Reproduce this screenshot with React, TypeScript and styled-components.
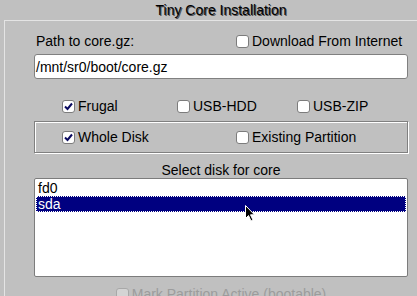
import React from "react";
import styled, { createGlobalStyle } from "styled-components";

const GlobalStyle = createGlobalStyle`
  html, body {
    margin: 0;
    padding: 0;
    background: #c0c0c0;
  }
  body {
    font-family: "Liberation Sans", Arial, sans-serif;
    font-size: 14px;
    color: #000;
  }
  * { box-sizing: border-box; }
`;

const Viewport = styled.div`
  width: 417px;
  height: 296px;
  overflow: hidden;
  position: relative;
  background: #c0c0c0;
`;

const Window = styled.div`
  width: 442px;
  display: flex;
  flex-direction: column;
`;

const Title = styled.div`
  height: 20px;
  padding-top: 2px;
  line-height: 16px;
  text-align: center;
  color: #000;
  text-shadow: 1px 1px 0 #505050;
`;

const Panel = styled.div`
  margin-left: 4px;
  height: 400px;
  border-top: 1px solid #e4e4e4;
  border-left: 1px solid #e4e4e4;
  display: flex;
  flex-direction: column;
  padding-left: 29px;
`;

const Content = styled.div`
  width: 374px;
  display: flex;
  flex-direction: column;
`;

const TopRow = styled.div`
  margin-top: 12px;
  height: 16px;
  display: flex;
  align-items: center;
`;

const FieldLabel = styled.span`
  line-height: 16px;
  padding-left: 2px;
  width: 202px;
`;

const TextInput = styled.div`
  margin-top: 5px;
  height: 25px;
  background: #fff;
  border: 1px solid #808080;
  border-radius: 3px;
  padding-left: 1px;
  display: flex;
  align-items: center;
  line-height: 16px;
`;

const CheckRow = styled.div<{ $top: number; $pad: number }>`
  margin-top: ${(p) => p.$top}px;
  height: 16px;
  display: flex;
  align-items: center;
  padding-left: ${(p) => p.$pad}px;
`;

const GroupBox = styled.div`
  margin-top: 7px;
  height: 32px;
  border: 1px solid #808080;
  box-shadow: 1px 1px 0 #ffffff, inset 1px 1px 0 #ffffff;
  display: flex;
  align-items: center;
  padding-left: 27px;
`;

const CheckItem = styled.label<{ $w?: number; $disabled?: boolean }>`
  display: flex;
  align-items: center;
  gap: 3px;
  width: ${(p) => (p.$w ? `${p.$w}px` : "auto")};
  line-height: 16px;
  color: ${(p) => (p.$disabled ? "#9c9c9c" : "#000")};
  white-space: nowrap;
`;

const Box = styled.span<{ $disabled?: boolean }>`
  width: 13px;
  height: 13px;
  border: 1px solid ${(p) => (p.$disabled ? "#a8a8a8" : "#7c7c7c")};
  border-radius: 3px;
  background: ${(p) => (p.$disabled ? "#d4d4d4" : "#ffffff")};
  display: flex;
  align-items: center;
  justify-content: center;
  flex: none;
  margin-top: 1px;
`;

const SectionLabel = styled.div`
  margin-top: 9px;
  line-height: 16px;
  text-align: center;
`;

const ListBox = styled.div`
  height: 99px;
  background: #fff;
  border: 1px solid #7c7c7c;
  border-radius: 2px;
  padding: 1px 1px 0 1px;
  display: flex;
  flex-direction: column;
  position: relative;
`;

const ListItem = styled.div<{ $selected?: boolean }>`
  height: 16px;
  line-height: 16px;
  padding-left: 2px;
  background: ${(p) => (p.$selected ? "#000080" : "transparent")};
  color: ${(p) => (p.$selected ? "#fff" : "#000")};
  outline: ${(p) => (p.$selected ? "1px dotted #ffffff" : "none")};
  outline-offset: -1px;
`;

const BottomRow = styled.div`
  margin-top: 9px;
  height: 16px;
  display: flex;
  justify-content: center;
`;

const Cursor = styled.svg`
  position: absolute;
  left: 245px;
  top: 205px;
`;

type CheckProps = { label: string; checked?: boolean; w?: number; disabled?: boolean };

const Check: React.FC<CheckProps> = ({ label, checked, w, disabled }) => (
  <CheckItem $w={w} $disabled={disabled}>
    <Box $disabled={disabled}>
      {checked && (
        <svg width="9" height="9" viewBox="0 0 9 9">
          <path d="M1 4.5 L3.5 7 L8 1.5" stroke="#0a0a60" strokeWidth="2" fill="none" />
        </svg>
      )}
    </Box>
    {label}
  </CheckItem>
);

export default function App() {
  return (
    <Viewport>
      <GlobalStyle />
      <Window>
        <Title>Tiny Core Installation</Title>
        <Panel>
          <Content>
            <TopRow>
              <FieldLabel>Path to core.gz:</FieldLabel>
              <Check label="Download From Internet" />
            </TopRow>
            <TextInput>/mnt/sr0/boot/core.gz</TextInput>
            <CheckRow $top={19} $pad={28}>
              <Check label="Frugal" checked w={115} />
              <Check label="USB-HDD" w={120} />
              <Check label="USB-ZIP" />
            </CheckRow>
            <GroupBox>
              <Check label="Whole Disk" checked w={174} />
              <Check label="Existing Partition" />
            </GroupBox>
            <SectionLabel>Select disk for core</SectionLabel>
            <ListBox>
              <ListItem>fd0</ListItem>
              <ListItem $selected>sda</ListItem>
            </ListBox>
            <BottomRow>
              <Check label="Mark Partition Active (bootable)" disabled />
            </BottomRow>
          </Content>
        </Panel>
      </Window>
      <Cursor width="11" height="17" viewBox="0 0 11 17">
        <path d="M0.5 0.5 L0.5 13.5 L3.5 10.5 L6 16 L8 15 L5.5 9.8 L9.5 9.8 Z" fill="#000" stroke="#fff" strokeWidth="1" />
      </Cursor>
    </Viewport>
  );
}
